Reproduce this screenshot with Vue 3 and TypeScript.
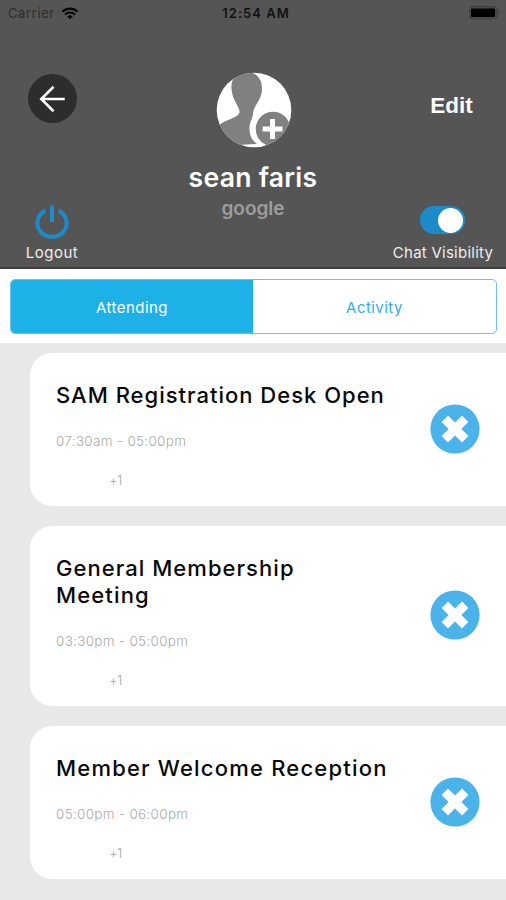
<script setup lang="ts">
import { ref } from 'vue'

interface TitleLine {
  text: string
  tracking: number
}

interface Session {
  id: number
  lines: TitleLine[]
  time: string
  extra: string
}

const activeTab = ref<'attending' | 'activity'>('attending')
const chatVisible = ref(true)

const sessions: Session[] = [
  { id: 1, lines: [{ text: 'SAM Registration Desk Open', tracking: 1 }], time: '07:30am - 05:00pm', extra: '+1' },
  {
    id: 2,
    lines: [
      { text: 'General Membership', tracking: 1.05 },
      { text: 'Meeting', tracking: 1.15 },
    ],
    time: '03:30pm - 05:00pm',
    extra: '+1',
  },
  { id: 3, lines: [{ text: 'Member Welcome Reception', tracking: 1.2 }], time: '05:00pm - 06:00pm', extra: '+1' },
]
</script>

<template>
  <main class="screen">
    <header class="profile">
      <div class="status">
        <div class="carrier">
          <span>Carrier</span>
          <svg class="wifi" viewBox="0 0 18 13">
            <path d="M1.4 4.7a11 11 0 0 1 15.2 0M4 7.5a7.2 7.2 0 0 1 10 0" />
            <path class="solid" d="M9 12.2 6.2 9.6a4 4 0 0 1 5.6 0z" />
          </svg>
        </div>
        <span class="clock">12:54 AM</span>
        <svg class="battery" viewBox="0 0 32 14">
          <rect class="shell" x="0.5" y="0.5" width="27.5" height="12.5" rx="3" />
          <rect x="2" y="2.5" width="24" height="8.5" rx="1" />
          <path class="tip" d="M29.3 4.5q2.4 2.3 0 4.6z" />
        </svg>
      </div>

      <div class="profile-body">
        <div class="side left">
          <button class="back" aria-label="Back">
            <svg viewBox="0 0 48 48"><path d="M36 24.5H13M25 12.5 13 24.5l12 12" /></svg>
          </button>
          <div class="action">
            <svg class="power" viewBox="0 0 36 36">
              <path d="M11.5 6.6A14.6 13.8 0 1 0 24.5 6.6M18 1.5v16.5" />
            </svg>
            <span class="action-label logout">Logout</span>
          </div>
        </div>

        <div class="identity">
          <svg class="avatar" viewBox="0 0 76 76">
            <defs>
              <clipPath id="avatar-clip"><circle cx="38" cy="38" r="37.3" /></clipPath>
            </defs>
            <g clip-path="url(#avatar-clip)">
              <rect class="paper" width="76" height="76" />
              <path
                class="grey"
                d="M0 55C7 49 17 47 22 43C25 40 23 37 21 33C17 26 14 18 16 10C18 4 22 0 26 0H34C42 2 46 8 46 17C46 28 38 33 37 41C37 47 33 50 33.5 58C34 65 37 69 41 72L26 72.8L20 76H0z"
              />
              <circle class="grey ring" cx="57" cy="57" r="19.5" />
              <path class="plus" d="M46.5 57h20M56.5 47v20" />
            </g>
          </svg>
          <h1 class="name">sean faris</h1>
          <span class="provider">google</span>
        </div>

        <div class="side right">
          <button class="edit">Edit</button>
          <div class="action">
            <button
              class="switch"
              :class="{ on: chatVisible }"
              aria-label="Chat Visibility"
              @click="chatVisible = !chatVisible"
            >
              <span class="knob"></span>
            </button>
            <span class="action-label visibility">Chat Visibility</span>
          </div>
        </div>
      </div>
    </header>

    <nav class="tabs">
      <div class="segmented">
        <button class="tab" :class="{ active: activeTab === 'attending' }" @click="activeTab = 'attending'">
          Attending
        </button>
        <button class="tab" :class="{ active: activeTab === 'activity' }" @click="activeTab = 'activity'">
          Activity
        </button>
      </div>
    </nav>

    <section class="list">
      <article v-for="s in sessions" :key="s.id" class="card">
        <div class="info">
          <h2 class="title">
            <span v-for="line in s.lines" :key="line.text" :style="{ letterSpacing: line.tracking + 'px' }">{{
              line.text
            }}</span>
          </h2>
          <p class="time">{{ s.time }}</p>
          <p class="extra">{{ s.extra }}</p>
        </div>
        <button class="remove" aria-label="Remove">
          <svg viewBox="0 0 50 50">
            <circle cx="25" cy="25" r="24.6" />
            <path d="m14.8 14.8 20.4 20.4M35.2 14.8 14.8 35.2" />
          </svg>
        </button>
      </article>
    </section>
  </main>
</template>

<style>
body {
  margin: 0;
  background: #e8e8e8;
}
</style>

<style scoped>
.screen {
  width: 506px;
  height: 900px;
  overflow: hidden;
  background: #e8e8e8;
  font-family: Inter, Roboto, sans-serif;
}
button {
  border: 0;
  padding: 0;
  background: none;
  font: inherit;
  color: inherit;
}
svg {
  display: block;
}
.profile {
  box-sizing: border-box;
  height: 269px;
  background: #555;
  border-bottom: 2px solid #403c40;
  color: #fff;
}
.status {
  display: grid;
  grid-template-columns: 1fr auto 1fr;
  align-items: center;
  height: 26px;
  padding: 0 5px 0 8px;
  color: #111;
}
.carrier {
  display: flex;
  align-items: center;
  gap: 6px;
  font-size: 13px;
  letter-spacing: 0.6px;
  color: #2c2c2c;
}
.wifi {
  width: 18px;
  height: 13px;
  fill: none;
  stroke: #080808;
  stroke-width: 2.2;
}
.wifi .solid {
  fill: #080808;
  stroke: none;
}
.clock {
  padding-left: 3px;
  font-size: 13px;
  font-weight: 600;
  letter-spacing: 1px;
}
.battery {
  width: 32px;
  height: 14px;
  justify-self: end;
  fill: #000;
}
.battery .shell {
  fill: #4b4b4b;
  stroke: #414141;
}
.battery .tip {
  fill: #414141;
}
.profile-body {
  display: grid;
  grid-template-columns: 104px 1fr 126px;
  height: 241px;
}
.side {
  display: flex;
  flex-direction: column;
  align-items: center;
}
.left {
  padding-top: 48px;
}
.back {
  width: 49px;
  height: 49px;
  border-radius: 50%;
  background: #2d2d2d;
}
.back svg {
  width: 49px;
  height: 49px;
  fill: none;
  stroke: #fff;
  stroke-width: 2.5;
}
.action {
  display: flex;
  flex-direction: column;
  align-items: center;
}
.left .action {
  margin-top: 81px;
}
.power {
  width: 36px;
  height: 36px;
  fill: none;
  stroke: #1b8bcc;
  stroke-width: 4;
}
.action-label {
  font-size: 15px;
  line-height: 20px;
  letter-spacing: 0.25px;
  color: #eee;
  white-space: nowrap;
}
.logout {
  margin-top: 3px;
  letter-spacing: 0.5px;
}
.identity {
  display: flex;
  flex-direction: column;
  align-items: center;
  padding: 46px 0 0 22px;
}
.identity .avatar {
  width: 76px;
  height: 76px;
  margin-left: 1px;
}
.paper {
  fill: #fff;
}
.grey {
  fill: #808080;
}
.ring {
  stroke: #fff;
  stroke-width: 4.5;
}
.plus {
  fill: none;
  stroke: #fff;
  stroke-width: 5;
}
.name {
  margin: 13px 0 0;
  font-size: 26.5px;
  line-height: 32px;
  font-weight: 600;
  letter-spacing: 0.3px;
}
.provider {
  margin-top: 3px;
  font-size: 19px;
  line-height: 26px;
  font-weight: 600;
  color: #9d9d9d;
}
.right {
  padding-top: 65px;
}
.edit {
  margin-left: 17px;
  font-family: "Liberation Sans", sans-serif;
  font-size: 22.5px;
  font-weight: 700;
  line-height: 30px;
}
.right .action {
  margin-top: 85px;
}
.switch {
  display: flex;
  align-items: center;
  justify-content: flex-start;
  box-sizing: border-box;
  width: 45px;
  height: 28px;
  margin-right: 2px;
  padding: 0 2px;
  border-radius: 14px;
  background: #8b8b8b;
}
.switch.on {
  justify-content: flex-end;
  background: #1b8bc9;
}
.knob {
  width: 25px;
  height: 25px;
  border-radius: 50%;
  background: #fff;
}
.visibility {
  margin-top: 9px;
}
.tabs {
  box-sizing: border-box;
  height: 74px;
  padding: 10px 9px 9px 10px;
  background: #fff;
}
.segmented {
  display: grid;
  grid-template-columns: 242px 1fr;
  box-sizing: border-box;
  height: 55px;
  overflow: hidden;
  border: 1.5px solid #72bfed;
  border-radius: 5px;
}
.tab {
  padding-top: 1px;
  color: #36aee6;
  font-size: 15px;
  letter-spacing: 0.45px;
}
.tab.active {
  background: #1db1e8;
  color: #fff;
}
.list {
  display: flex;
  flex-direction: column;
  gap: 20px;
  padding: 10px 0 0 30px;
}
.card {
  display: flex;
  justify-content: space-between;
  align-items: center;
  box-sizing: border-box;
  padding: 29px 26px 16px;
  border-radius: 22px 0 0 22px;
  background: #fff;
}
.title {
  margin: 0;
  font-size: 22px;
  line-height: 26.5px;
  font-weight: 500;
  color: #080808;
  white-space: nowrap;
}
.title span {
  display: block;
}
.time {
  margin: 22.5px 0 0;
  font-size: 13.5px;
  line-height: 20px;
  font-weight: 300;
  letter-spacing: 0.3px;
  color: #aaa;
}
.extra {
  margin: 19px 0 0 53px;
  font-size: 13.5px;
  line-height: 20px;
  font-weight: 300;
  letter-spacing: -0.8px;
  color: #aaa;
}
.remove {
  width: 50px;
  height: 50px;
  margin-top: -14px;
}
.remove svg {
  width: 50px;
  height: 50px;
  fill: #4ab3e9;
}
.remove path {
  stroke: #fff;
  stroke-width: 9;
}
</style>
